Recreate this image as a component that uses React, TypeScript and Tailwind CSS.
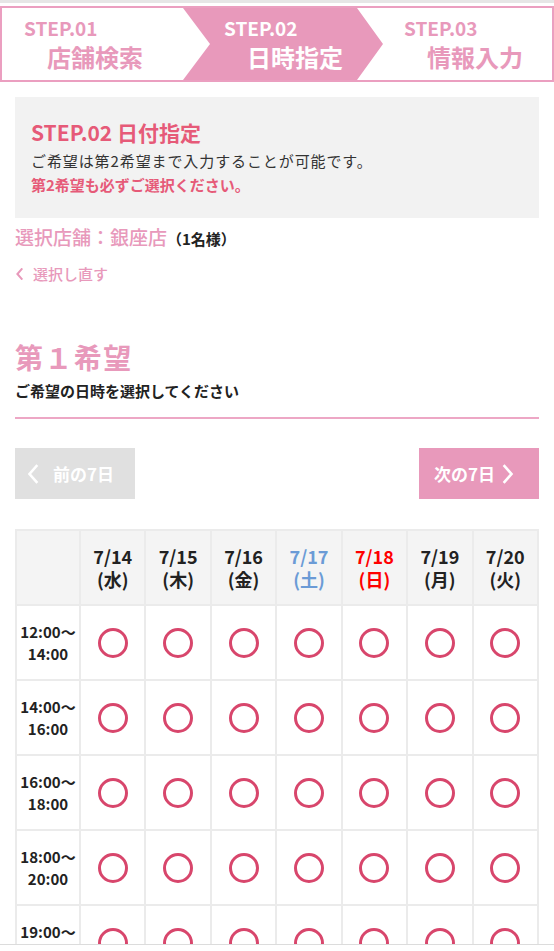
import React from "react";

const PINK = "#e899bb";

function Chevron({ dir, className, sw = 2.6 }: { dir: "left" | "right"; className?: string; sw?: number }) {
  return (
    <svg viewBox="0 0 12 20" className={className} fill="none" stroke="currentColor" strokeWidth={sw} strokeLinecap="square">
      {dir === "left" ? <path d="M9.5 2 L2.5 10 L9.5 18" /> : <path d="M2.5 2 L9.5 10 L2.5 18" />}
    </svg>
  );
}

const days = [
  { d: "7/14", w: "(水)", c: "text-[#222]" },
  { d: "7/15", w: "(木)", c: "text-[#222]" },
  { d: "7/16", w: "(金)", c: "text-[#222]" },
  { d: "7/17", w: "(土)", c: "text-[#6b9bd6]" },
  { d: "7/18", w: "(日)", c: "text-[#ff0000]" },
  { d: "7/19", w: "(月)", c: "text-[#222]" },
  { d: "7/20", w: "(火)", c: "text-[#222]" },
];

const times = [
  ["12:00〜", "14:00"],
  ["14:00〜", "16:00"],
  ["16:00〜", "18:00"],
  ["18:00〜", "20:00"],
  ["19:00〜", "21:00"],
  ["20:00〜", "22:00"],
];

export default function App() {
  return (
    <div className="min-h-[951px] bg-white font-['Noto_Sans_CJK_JP','Noto_Sans',sans-serif] text-[#222]">
      <div className="h-[3px] bg-[#e6e6e6]" />
      {/* Step bar */}
      <div className="mt-[3px] h-[76px] border-2 border-[#eb9fc0] flex">
        <div className="w-[181px] shrink-0 flex flex-col pt-[8px] text-[#e899bb]">
          <div className="pl-[22px] text-[19px] leading-[24px] font-bold">STEP.01</div>
          <div className="pl-[45px] mt-[2px] text-[24px] leading-[30px] font-bold">店舗検索</div>
        </div>
        <div className="w-[200px] shrink-0 bg-[#e899bb] [clip-path:polygon(0_0,174px_0,100%_50%,174px_100%,0_100%,27px_50%)] flex flex-col pt-[8px] text-white">
          <div className="pl-[41px] text-[19px] leading-[24px] font-bold">STEP.02</div>
          <div className="pl-[64px] mt-[2px] text-[24px] leading-[30px] font-bold">日時指定</div>
        </div>
        <div className="flex-1 flex flex-col pt-[8px] text-[#e899bb]">
          <div className="pl-[21px] text-[19px] leading-[24px] font-bold">STEP.03</div>
          <div className="pl-[44px] mt-[2px] text-[24px] leading-[30px] font-bold">情報入力</div>
        </div>
      </div>

      <div className="px-[15px]">
        {/* Info box */}
        <div className="mt-[15px] bg-[#f2f2f2] px-[16px] pt-[20px] pb-[21px]">
          <div className="text-[21px] leading-[30px] font-bold text-[#e65a78]">STEP.02 日付指定</div>
          <div className="mt-[2px] text-[15px] leading-[24px] tracking-[0.06em] text-[#333]">ご希望は第2希望まで入力することが可能です。</div>
          <div className="text-[15px] leading-[24px] font-bold text-[#e65a78]">第2希望も必ずご選択ください。</div>
        </div>

        <div className="mt-[5px] flex items-baseline leading-[28px]">
          <span className="text-[19px] font-medium" style={{ color: PINK }}>選択店舗：銀座店</span>
          <span className="text-[15px] font-bold text-[#222]">（1名様）</span>
        </div>

        <div className="mt-[9px] flex items-center h-[24px] text-[#e899bb]">
          <Chevron dir="left" sw={3.4} className="w-[9px] h-[12px]" />
          <span className="ml-[9px] text-[15px] leading-[24px] font-medium">選択し直す</span>
        </div>

        <div className="mt-[51px] text-[28px] leading-[40px] font-bold tracking-[0.05em] text-[#e899bb]">第１希望</div>
        <div className="mt-[2px] text-[15px] leading-[24px] font-bold text-[#222]">ご希望の日時を選択してください</div>
        <div className="mt-[14px] h-[2px] bg-[#eda7c5]" />

        {/* Buttons */}
        <div className="mt-[29px] flex justify-between">
          <div className="w-[120px] h-[51px] bg-[#e0e0e0] flex items-center text-white">
            <Chevron dir="left" className="ml-[12px] w-[12px] h-[20px]" />
            <span className="ml-[14px] text-[17px] font-bold">前の7日</span>
          </div>
          <div className="w-[120px] h-[51px] bg-[#e899bb] flex items-center text-white">
            <span className="ml-[15px] text-[17px] font-bold">次の7日</span>
            <Chevron dir="right" className="ml-[7px] w-[12px] h-[20px]" />
          </div>
        </div>

        {/* Table */}
        <div className="mt-[30px] grid grid-cols-[64px_repeat(7,minmax(0,1fr))] border-l-2 border-t-2 border-[#ebebeb]">
          <div className="h-[75px] bg-[#f4f4f4] border-r-2 border-b-2 border-[#ebebeb]" />
          {days.map((d) => (
            <div key={d.d} className={`h-[75px] bg-[#f4f4f4] border-r-2 border-b-2 border-[#ebebeb] flex flex-col items-center justify-center font-bold text-[18px] leading-[23px] ${d.c}`}>
              <div>{d.d}</div>
              <div>{d.w}</div>
            </div>
          ))}
          {times.map((t) => (
            <React.Fragment key={t[0]}>
              <div className="h-[75px] border-r-2 border-b-2 border-[#ebebeb] flex flex-col items-center justify-center font-bold text-[15px] leading-[22px] text-[#222]">
                <div>{t[0]}</div>
                <div>{t[1]}</div>
              </div>
              {days.map((d) => (
                <div key={d.d} className="h-[75px] border-r-2 border-b-2 border-[#ebebeb] flex items-center justify-center">
                  <div className="w-[30px] h-[30px] rounded-full border-[3px] border-[#d8466c]" />
                </div>
              ))}
            </React.Fragment>
          ))}
        </div>
        <div className="h-[40px]" />
      </div>
      <div className="fixed left-0 right-0 bottom-0 h-[7px] bg-white border-t border-[#dcdcdc]" />
    </div>
  );
}
